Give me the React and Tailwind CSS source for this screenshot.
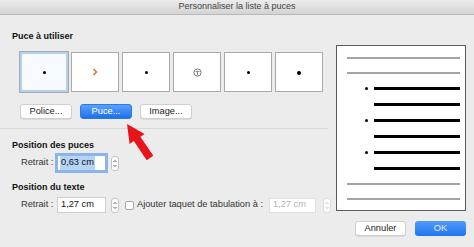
import React from 'react';

const Stepper = ({ faded }) => (
  <div className={`w-[8px] h-[15px] bg-white border rounded-[3px] flex items-center justify-center ${faded ? 'border-[#dcdcdc]' : 'border-[#c4c4c4]'}`}>
    <svg width="6" height="11" viewBox="0 0 6 11">
      <path d="M1.5 4 L3 2.5 L4.5 4" fill="none" stroke={faded ? '#c0c0c0' : '#555'} strokeWidth="0.9" />
      <path d="M1.5 7 L3 8.5 L4.5 7" fill="none" stroke={faded ? '#c0c0c0' : '#555'} strokeWidth="0.9" />
    </svg>
  </div>
);

const BulletBox = ({ selected, children }) => (
  <div
    className={`w-[48px] h-[40px] flex items-center justify-center ${
      selected ? 'bg-[#f7fbff] border-2 border-[#b3cfee] outline outline-1 outline-[#a9a9a9]' : 'bg-white border border-[#a9a9a9]'
    }`}
  >
    {children}
  </div>
);

const Dot = ({ size = 3 }) => <div className="rounded-full bg-black" style={{ width: size, height: size }} />;

const Btn = ({ children, blue, w }) => (
  <div
    className={`${w} h-[15px] rounded-[3px] flex items-center justify-center text-[9.25px] ${
      blue
        ? 'bg-gradient-to-b from-[#5aa1fa] to-[#1c70ec] text-white border border-[#2c7ae8]'
        : 'bg-white text-[#222] border border-[#cfcfcf] shadow-[0_0.5px_0.5px_rgba(0,0,0,0.15)]'
    }`}
  >
    {children}
  </div>
);

const Line = ({ dark }) => (
  <div className={dark ? 'h-[3px] bg-black' : 'h-[2px] bg-[#a3a3a3]'} />
);

export default function App() {
  return (
    <div className="relative w-[474px] h-[247px] bg-[#ececec] flex flex-col overflow-hidden" style={{ fontFamily: '"Liberation Sans", Arial, sans-serif' }}>
      <div className="h-[15px] bg-gradient-to-b from-[#ececec] to-[#d4d4d4] border-b border-[#b8b8b8] flex items-center justify-center text-[9px] text-[#444]">
        Personnaliser la liste à puces
      </div>

      <div className="flex">
        <div className="w-[330px] shrink-0 flex flex-col">
          <div className="ml-[12px] mt-[15px] h-[12px] leading-[12px] text-[9px] font-bold text-[#111]">Puce à utiliser</div>
          <div className="ml-[20px] mt-[10px] flex gap-[3px]">
            <BulletBox selected><Dot /></BulletBox>
            <BulletBox>
              <svg width="6" height="8" viewBox="0 0 6 8">
                <path d="M1.5 1 L4.5 4 L1.5 7" fill="none" stroke="#c9773d" strokeWidth="1.6" />
              </svg>
            </BulletBox>
            <BulletBox><Dot /></BulletBox>
            <BulletBox>
              <svg width="9" height="9" viewBox="0 0 9 9">
                <circle cx="4.5" cy="4.5" r="3.6" fill="none" stroke="#777" strokeWidth="1" />
                <path d="M2.5 3.6 H6.5 M4.5 3.6 V7" stroke="#777" strokeWidth="0.9" />
              </svg>
            </BulletBox>
            <BulletBox><Dot /></BulletBox>
            <BulletBox><div className="mt-[2px]"><Dot size={4} /></div></BulletBox>
          </div>
          <div className="ml-[20px] mt-[12px] flex gap-[8px]">
            <Btn w="w-[52px]">Police...</Btn>
            <Btn w="w-[52px]" blue>Puce...</Btn>
            <Btn w="w-[52px]">Image...</Btn>
          </div>
          <div className="mt-[9px] h-px w-[328px] bg-[#d8d8d8]" />

          <div className="ml-[12px] mt-[10px] h-[12px] leading-[12px] text-[9px] font-bold text-[#111]">Position des puces</div>
          <div className="mt-[4px] flex items-center h-[16px]">
            <span className="ml-[21px] w-[36px] text-[9.25px] text-[#333]">Retrait :</span>
            <div className="w-[49px] h-[16px] bg-white border border-[#8fb5e6] ring-2 ring-[#8ab4ec] flex items-center pl-[2px] text-[9.25px] text-[#111]">
              <span className="bg-[#b6d4fa] px-[1px]">0,63 cm</span>
            </div>
            <div className="ml-[5px]"><Stepper /></div>
          </div>

          <div className="ml-[12px] mt-[10px] h-[12px] leading-[12px] text-[9px] font-bold text-[#111]">Position du texte</div>
          <div className="mt-[4px] flex items-center h-[16px] text-[9.25px] whitespace-nowrap">
            <span className="ml-[21px] w-[36px] shrink-0 text-[#333]">Retrait :</span>
            <div className="w-[49px] shrink-0 h-[16px] bg-white border border-[#cfcfcf] flex items-center pl-[3px] text-[#111]">1,27 cm</div>
            <div className="ml-[5px] shrink-0"><Stepper /></div>
            <div className="ml-[6px] shrink-0 w-[9px] h-[9px] bg-white border border-[#a8a8a8] rounded-[2px]" />
            <span className="ml-[3px] text-[#333]">Ajouter taquet de tabulation à :</span>
            <div className="ml-[6px] shrink-0 w-[47px] h-[15px] bg-white border border-[#e0e0e0] flex items-center pl-[3px] text-[#b4b4b4]">1,27 cm</div>
            <div className="ml-[7px] shrink-0"><Stepper faded /></div>
          </div>
        </div>

        <div className="ml-[6px] mt-[30px] flex flex-col">
          <div className="w-[130px] h-[166px] bg-white border border-[#5a5a5a] pt-[11px] pl-[10px] pr-[5px] flex flex-col gap-[13px]">
            <Line />
            <Line />
            <div className="flex items-center h-[3px]"><div className="ml-[18px] w-[3px] h-[3px] rounded-full bg-black" /><div className="ml-[6px] flex-1"><Line dark /></div></div>
            <div className="ml-[27px]"><Line dark /></div>
            <div className="flex items-center h-[3px]"><div className="ml-[18px] w-[3px] h-[3px] rounded-full bg-black" /><div className="ml-[6px] flex-1"><Line dark /></div></div>
            <div className="ml-[27px]"><Line dark /></div>
            <div className="flex items-center h-[3px]"><div className="ml-[18px] w-[3px] h-[3px] rounded-full bg-black" /><div className="ml-[6px] flex-1"><Line dark /></div></div>
            <div className="ml-[27px]"><Line dark /></div>
            <Line />
            <Line />
          </div>
          <div className="mt-[10px] flex justify-end gap-[9px]">
            <Btn w="w-[51px]">Annuler</Btn>
            <div className="w-[51px] h-[15px] rounded-[3px] bg-gradient-to-b from-[#4f9cfa] to-[#1f74ee] text-[#e6efff] text-[9.25px] flex items-center justify-center">OK</div>
          </div>
        </div>
      </div>

      <svg className="absolute left-0 top-0 pointer-events-none" width="474" height="247">
        <polygon
          points="127,124 144.6,133.9 140.4,136.7 153.3,155.8 146.7,160.2 133.8,141.1 129.6,143.9"
          fill="#e8141b"
        />
      </svg>
    </div>
  );
}
